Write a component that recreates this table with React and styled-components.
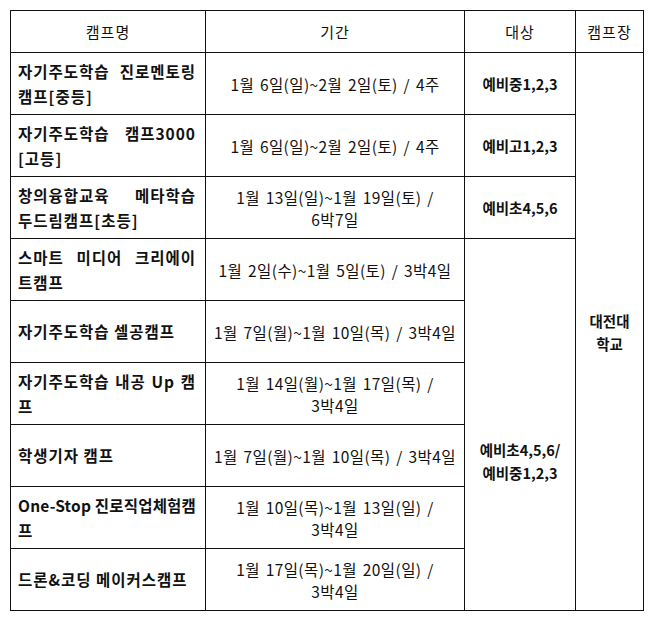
import React from "react";
import styled, { createGlobalStyle } from "styled-components";

const camps = [
  {
    name: ["자기주도학습 진로멘토링", "캠프[중등]"],
    period: ["1월 6일(일)~2월 2일(토) / 4주"],
    target: "예비중1,2,3",
  },
  {
    name: ["자기주도학습 캠프3000", "[고등]"],
    period: ["1월 6일(일)~2월 2일(토) / 4주"],
    target: "예비고1,2,3",
  },
  {
    name: ["창의융합교육 메타학습", "두드림캠프[초등]"],
    period: ["1월 13일(일)~1월 19일(토) /", "6박7일"],
    target: "예비초4,5,6",
  },
  {
    name: ["스마트 미디어 크리에이", "트캠프"],
    period: ["1월 2일(수)~1월 5일(토) / 3박4일"],
  },
  {
    name: ["자기주도학습 셀공캠프"],
    period: ["1월 7일(월)~1월 10일(목) / 3박4일"],
  },
  {
    name: ["자기주도학습 내공 Up 캠", "프"],
    period: ["1월 14일(월)~1월 17일(목) /", "3박4일"],
  },
  {
    name: ["학생기자 캠프"],
    period: ["1월 7일(월)~1월 10일(목) / 3박4일"],
  },
  {
    name: ["One-Stop 진로직업체험캠", "프"],
    period: ["1월 10일(목)~1월 13일(일) /", "3박4일"],
    tight: true,
  },
  {
    name: ["드론&코딩 메이커스캠프"],
    period: ["1월 17일(목)~1월 20일(일) /", "3박4일"],
  },
];

const App = () => {
  return (
    <>
      <GlobalStyle />
      <Page>
        <Table>
          <colgroup>
            <col style={{ width: 195 }} />
            <col style={{ width: 259 }} />
            <col style={{ width: 111 }} />
            <col style={{ width: 68 }} />
          </colgroup>
          <thead>
            <HeadRow>
              <HeadCell>캠프명</HeadCell>
              <HeadCell>기간</HeadCell>
              <HeadCell>대상</HeadCell>
              <HeadCell>캠프장</HeadCell>
            </HeadRow>
          </thead>
          <tbody>
            {camps.map((camp, i) => (
              <BodyRow key={i}>
                <NameCell $tight={camp.tight}>
                  {camp.name.map((line, j) => (
                    <NameLine key={j} $justify={j < camp.name.length - 1}>
                      {line}
                    </NameLine>
                  ))}
                </NameCell>
                <PeriodCell>
                  {camp.period.map((line, j) => (
                    <div key={j}>{line}</div>
                  ))}
                </PeriodCell>
                {camp.target && <TargetCell>{camp.target}</TargetCell>}
                {i === 3 && (
                  <TargetCell rowSpan={6} $shift>
                    예비초4,5,6/
                    <br />
                    예비중1,2,3
                  </TargetCell>
                )}
                {i === 0 && (
                  <PlaceCell rowSpan={9}>
                    대전대
                    <br />
                    학교
                  </PlaceCell>
                )}
              </BodyRow>
            ))}
          </tbody>
        </Table>
      </Page>
    </>
  );
};

export default App;

// Styled Components

const GlobalStyle = createGlobalStyle`
  html, body {
    margin: 0;
    padding: 0;
    background: #ffffff;
  }
  body {
    font-family: "Noto Sans CJK KR", "Noto Sans", sans-serif;
    color: #111111;
  }
`;

const Page = styled.div`
  width: 656px;
  height: 626px;
  padding: 10px 0 0 10px;
  box-sizing: border-box;
`;

const Table = styled.table`
  border-collapse: collapse;
  table-layout: fixed;
  width: 634px;
  font-size: 14.5px;
  line-height: 23px;

  td,
  th {
    border: 1.5px solid #111111;
    padding: 0;
  }
`;

const HeadRow = styled.tr`
  height: 42px;
`;

const BodyRow = styled.tr`
  height: 62px;
`;

const HeadCell = styled.th`
  font-weight: 400;
  font-size: 15px;
  letter-spacing: 1px;
  text-align: center;
  vertical-align: middle;
`;

const NameCell = styled.td`
  padding: 0 9px 0 7px !important;
  font-weight: 700;
  font-size: 15.5px;
  vertical-align: middle;
  letter-spacing: ${(p) => (p.$tight ? "0.2px" : "1px")};
  line-height: 25px;
  overflow: hidden;
`;

const NameLine = styled.div`
  white-space: nowrap;
  text-align: ${(p) => (p.$justify ? "justify" : "left")};
  text-align-last: ${(p) => (p.$justify ? "justify" : "left")};
`;

const PeriodCell = styled.td`
  text-align: center;
  vertical-align: middle;
  white-space: nowrap;
  font-size: 15.5px;
  letter-spacing: 0.4px;
  word-spacing: 2px;
  line-height: 22px;
`;

const TargetCell = styled.td`
  font-weight: 700;
  text-align: center;
  vertical-align: middle;
  line-height: 23px;
  padding-top: ${(p) => (p.$shift ? "72px" : "0")} !important;
`;

const PlaceCell = styled.td`
  font-weight: 700;
  text-align: center;
  vertical-align: middle;
  line-height: 23px;
`;
